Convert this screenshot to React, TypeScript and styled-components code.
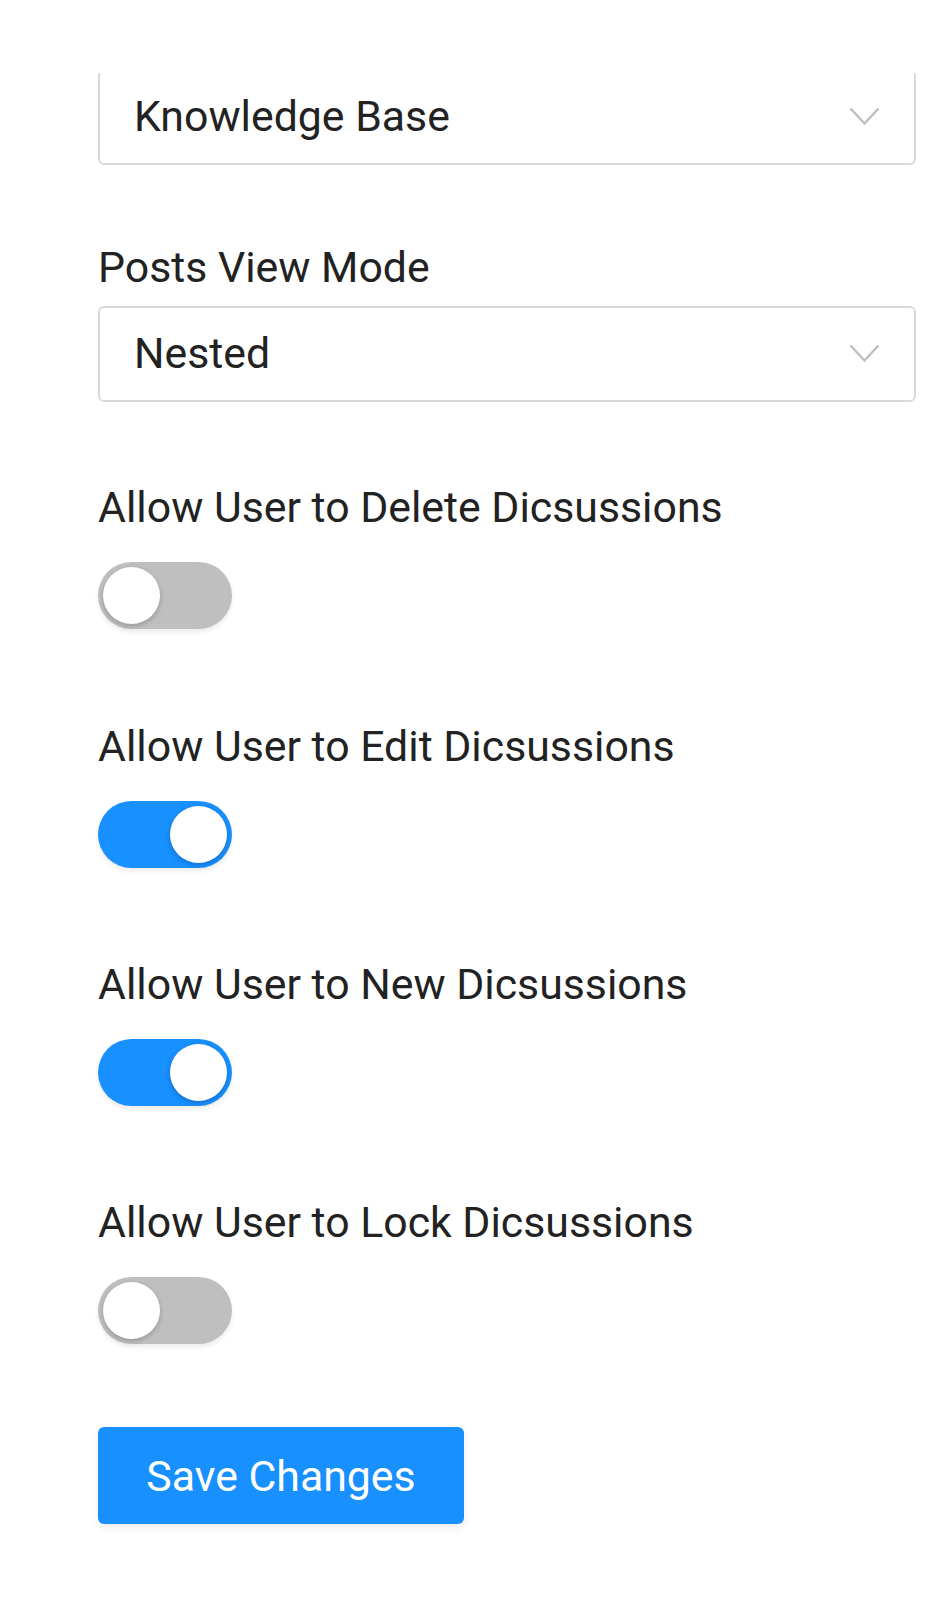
import React, { useState } from 'react';
import styled, { createGlobalStyle } from 'styled-components';

const GlobalStyle = createGlobalStyle`
  html, body {
    margin: 0;
    padding: 0;
    background: #fff;
  }
  body {
    font-family: Roboto, 'Liberation Sans', Arial, sans-serif;
    color: #222;
  }
`;

const Page = styled.div`
  width: 949px;
  height: 1600px;
  display: flex;
  flex-direction: column;
  background: #fff;
  overflow: hidden;
`;

const HeaderSpace = styled.div`
  height: 73px;
  flex-shrink: 0;
  background: #fff;
  position: relative;
  z-index: 1;
`;

const Form = styled.div`
  display: flex;
  flex-direction: column;
  padding-left: 98px;
  width: 818px;
`;

const Field = styled.div<{ $gap: number; $shift?: number }>`
  display: flex;
  flex-direction: column;
  margin-top: ${p => p.$shift ?? 0}px;
  margin-bottom: ${p => p.$gap}px;
`;

const Label = styled.div`
  font-size: 42.8px;
  line-height: 58px;
  color: #222;
  white-space: nowrap;
`;

const SelectBox = styled.div<{ $top?: number }>`
  margin-top: ${p => p.$top ?? 0}px;
  height: 96px;
  box-sizing: border-box;
  border: 2px solid #dadada;
  border-radius: 6px;
  display: flex;
  align-items: center;
  justify-content: space-between;
  padding: 0 34px 2px 34px;
  font-size: 42.8px;
  color: #222;
  background: #fff;
`;

const Chevron = () => (
  <svg width="31" height="18" viewBox="0 0 31 18" fill="none">
    <polyline points="1.5,1.5 15.5,16.5 29.5,1.5" stroke="#bfbfbf" strokeWidth="2.4" />
  </svg>
);

const Track = styled.button<{ $on: boolean }>`
  margin-top: 26px;
  width: 134px;
  height: 67px;
  border: none;
  padding: 0;
  border-radius: 34px;
  background: ${p => (p.$on ? '#1890ff' : '#bfbfbf')};
  position: relative;
  cursor: pointer;
  box-shadow: 0 3px 5px rgba(0, 0, 0, 0.08);
`;

const Knob = styled.span<{ $on: boolean }>`
  position: absolute;
  top: 5px;
  left: ${p => (p.$on ? '72px' : '5px')};
  width: 57px;
  height: 57px;
  border-radius: 50%;
  background: #fff;
  box-shadow: 0 2px 5px rgba(0, 0, 0, 0.22);
`;

const SaveButton = styled.button`
  width: 366px;
  height: 97px;
  border: none;
  border-radius: 6px;
  background: #1890ff;
  color: #fff;
  font-family: Roboto, 'Liberation Sans', Arial, sans-serif;
  font-size: 42.8px;
  box-shadow: 0 4px 8px rgba(0, 0, 0, 0.08);
  cursor: pointer;
`;

type SwitchProps = { on: boolean; onToggle: () => void };

const Switch = ({ on, onToggle }: SwitchProps) => (
  <Track $on={on} onClick={onToggle} aria-pressed={on}>
    <Knob $on={on} />
  </Track>
);

const permissions = [
  { key: 'delete', label: 'Allow User to Delete Dicsussions', on: false, gap: 88 },
  { key: 'edit', label: 'Allow User to Edit Dicsussions', on: true, gap: 87 },
  { key: 'new', label: 'Allow User to New Dicsussions', on: true, gap: 87 },
  { key: 'lock', label: 'Allow User to Lock Dicsussions', on: false, gap: 83 },
];

const App = () => {
  const [flags, setFlags] = useState<Record<string, boolean>>(
    Object.fromEntries(permissions.map(p => [p.key, p.on]))
  );

  return (
    <Page>
      <GlobalStyle />
      <HeaderSpace />
      <Form>
        <Field $gap={73} $shift={-4}>
          <SelectBox>
            <span>Knowledge Base</span>
            <Chevron />
          </SelectBox>
        </Field>
        <Field $gap={76}>
          <Label>Posts View Mode</Label>
          <SelectBox $top={10}>
            <span>Nested</span>
            <Chevron />
          </SelectBox>
        </Field>
        {permissions.map(p => (
          <Field key={p.key} $gap={p.gap}>
            <Label>{p.label}</Label>
            <Switch on={flags[p.key]} onToggle={() => setFlags(f => ({ ...f, [p.key]: !f[p.key] }))} />
          </Field>
        ))}
        <div>
          <SaveButton>Save Changes</SaveButton>
        </div>
      </Form>
    </Page>
  );
};

export default App;
